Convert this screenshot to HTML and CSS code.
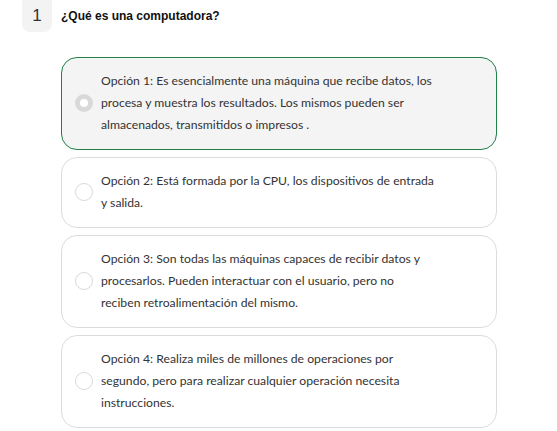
FILE: index.html
```html
<!DOCTYPE html>
<html lang="es">
<head>
<meta charset="utf-8">
<link rel="stylesheet" href="styles.css">
</head>
<body>
<div class="question">
  <div class="q-head">
    <div class="q-num">1</div>
    <div class="q-title">¿Qué es una computadora?</div>
  </div>
  <div class="options">
    <div class="option selected">
      <span class="radio"></span>
      <div class="opt-text">Opción 1: Es esencialmente una máquina que recibe datos, los<br>procesa y muestra los resultados. Los mismos pueden ser<br>almacenados, transmitidos o impresos .</div>
    </div>
    <div class="option">
      <span class="radio"></span>
      <div class="opt-text">Opción 2: Está formada por la CPU, los dispositivos de entrada<br>y salida.</div>
    </div>
    <div class="option">
      <span class="radio"></span>
      <div class="opt-text">Opción 3: Son todas las máquinas capaces de recibir datos y<br>procesarlos. Pueden interactuar con el usuario, pero no<br>reciben retroalimentación del mismo.</div>
    </div>
    <div class="option">
      <span class="radio"></span>
      <div class="opt-text">Opción 4: Realiza miles de millones de operaciones por<br>segundo, pero para realizar cualquier operación necesita<br>instrucciones.</div>
    </div>
  </div>
</div>
</body>
</html>
```
FILE: styles.css
```css
html, body {
  margin: 0;
  padding: 0;
  background: #ffffff;
}
.question {
  padding-left: 22px;
}
.q-head {
  display: flex;
  align-items: flex-start;
}
.q-num {
  width: 30px;
  height: 32px;
  background: #f3f3f3;
  border-radius: 0 0 8px 8px;
  display: flex;
  align-items: center;
  justify-content: center;
  font-family: "Liberation Sans", Arial, sans-serif;
  font-size: 17px;
  color: #333;
}
.q-title {
  margin-left: 9px;
  margin-top: 9px;
  font-family: "Liberation Sans", Arial, sans-serif;
  font-weight: bold;
  font-size: 12px;
  color: #111;
}
.options {
  margin-left: 39px;
  margin-top: 25px;
  width: 436px;
  display: flex;
  flex-direction: column;
  gap: 7px;
}
.option {
  display: flex;
  align-items: center;
  border: 1px solid #dcdcdc;
  border-radius: 16px;
  padding: 12px 0 13px 13px;
  background: #fff;
}
.option.selected {
  border-color: #1f8048;
  background: #f4f4f4;
}
.radio {
  width: 16px;
  height: 16px;
  border: 1px solid #d9d9d9;
  border-radius: 50%;
  background: #fff;
  flex: none;
}
.selected .radio {
  width: 8px;
  height: 8px;
  border: 5px solid #d9d9d9;
}
.opt-text {
  margin-left: 8px;
  font-family: Lato, sans-serif;
  font-size: 12.2px;
  line-height: 22px;
  color: #333;
  white-space: nowrap;
}
```
